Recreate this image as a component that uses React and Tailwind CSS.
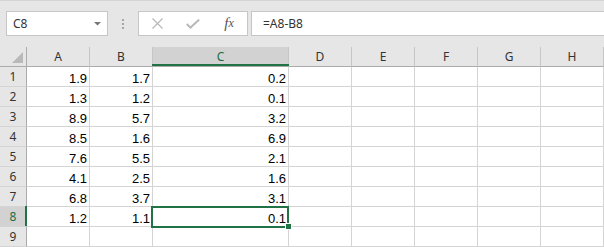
import React from "react";

const cols = ["A", "B", "C", "D", "E", "F", "G", "H"];
const data = [
  ["1.9", "1.7", "0.2"],
  ["1.3", "1.2", "0.1"],
  ["8.9", "5.7", "3.2"],
  ["8.5", "1.6", "6.9"],
  ["7.6", "5.5", "2.1"],
  ["4.1", "2.5", "1.6"],
  ["6.8", "3.7", "3.1"],
  ["1.2", "1.1", "0.1"],
  ["", "", ""],
];

const GREEN = "#217346";

function TopBar() {
  return (
    <div className="h-[47px] bg-[#e6e6e6] border-t border-[#d4d4d4] flex items-start pt-[10px]">
      {/* name box */}
      <div className="ml-[6px] w-[102px] h-[25px] border border-[#c6c6c6] bg-white relative flex items-center pl-[6px] text-[12px] text-[#333] font-['Noto_Sans',sans-serif]">
        C8
        <svg className="absolute left-[87px] top-[10px]" width="8" height="4" viewBox="0 0 8 4">
          <polygon points="0,0 7,0 3.5,3.5" fill="#777" />
        </svg>
      </div>
      {/* separator dots */}
      <div className="w-[30px] h-[25px] flex flex-col items-center justify-center gap-[2px]">
        <div className="w-[2px] h-[2px] bg-[#a6a6a6]" />
        <div className="w-[2px] h-[2px] bg-[#a6a6a6]" />
        <div className="w-[2px] h-[2px] bg-[#a6a6a6]" />
      </div>
      {/* cancel / enter / fx */}
      <div className="w-[110px] h-[25px] border border-[#c6c6c6] bg-white flex">
        <div className="flex-1 flex items-center justify-center">
          <svg width="11" height="11" viewBox="0 0 11 11">
            <path d="M0.5 0.5 L10.5 10.5 M10.5 0.5 L0.5 10.5" stroke="#b8b8b8" strokeWidth="1.2" fill="none" />
          </svg>
        </div>
        <div className="flex-1 flex items-center justify-center">
          <svg width="14" height="10" viewBox="0 0 14 10">
            <path d="M0.8 5 L4.5 8.6 L13.2 0.6" stroke="#b8b8b8" strokeWidth="2" fill="none" />
          </svg>
        </div>
        <div className="flex-1 flex items-center justify-center text-[#555] italic text-[15px] font-['Liberation_Serif',serif] leading-none pb-[1px]">
          <span>f</span>
          <span className="text-[12px]">x</span>
        </div>
      </div>
      {/* formula box */}
      <div className="ml-[3px] flex-1 h-[25px] border border-[#c6c6c6] border-r-0 bg-white flex items-center pl-[11px] text-[12px] text-[#333] font-['Noto_Sans',sans-serif]">
        =A8-B8
      </div>
    </div>
  );
}

function Sheet() {
  return (
    <div className="grid grid-cols-[27px_63px_63px_136px_63px_63px_63px_63px_63px] bg-white">
      {/* corner */}
      <div className="h-[20px] bg-[#e6e6e6] border-r border-b border-[#ababab] relative">
        <svg className="absolute left-[12px] top-[4px]" width="12" height="13" viewBox="0 0 12 13">
          <polygon points="0,12 11,12 11,1" fill="#b9b9b9" />
        </svg>
      </div>
      {cols.map((c) => (
        <div
          key={c}
          className={
            "h-[20px] border-r border-b border-r-[#c6c6c6] border-b-[#ababab] flex items-center justify-center text-[12px] font-['Noto_Sans',sans-serif] relative " +
            (c === "C" ? "bg-[#d2d2d2] text-[#1e6b41]" : "bg-[#e6e6e6] text-[#333]")
          }
        >
          {c}
          {c === "C" && (
            <div className="absolute left-[-1px] right-[-1px] bottom-0 h-[2px] bg-[#217346]" />
          )}
        </div>
      ))}

      {data.map((row, i) => (
        <React.Fragment key={i}>
          <div
            className={
              "h-[20px] border-r border-b border-r-[#ababab] border-b-[#d4d4d4] flex items-center justify-center text-[12px] font-['Noto_Sans',sans-serif] relative " +
              (i === 7 ? "bg-[#d2d2d2] text-[#1e6b41]" : "bg-[#e6e6e6] text-[#333]")
            }
          >
            {i + 1}
            {i === 7 && (
              <div className="absolute right-[-1px] top-[-1px] bottom-0 w-[2px] bg-[#217346]" />
            )}
          </div>
          {cols.map((c, j) => (
            <div
              key={c}
              className="h-[20px] border-r border-b border-[#d4d4d4] flex items-end justify-end pr-[2px] text-[13px] leading-[15px] text-black font-['Liberation_Sans',Arial,sans-serif] relative"
            >
              {j < 3 ? row[j] : ""}
              {i === 7 && c === "C" && (
                <>
                  <div
                    className="absolute left-[-2px] right-[-1px] top-[-1px] bottom-[-2px] border-2 z-10"
                    style={{ borderColor: GREEN }}
                  />
                  <div className="absolute right-[-4px] bottom-[-4px] w-[7px] h-[7px] border border-white bg-[#217346] z-20" />
                </>
              )}
            </div>
          ))}
        </React.Fragment>
      ))}
    </div>
  );
}

export default function App() {
  return (
    <div className="w-[604px] h-[247px] overflow-hidden bg-white">
      <TopBar />
      <Sheet />
    </div>
  );
}
